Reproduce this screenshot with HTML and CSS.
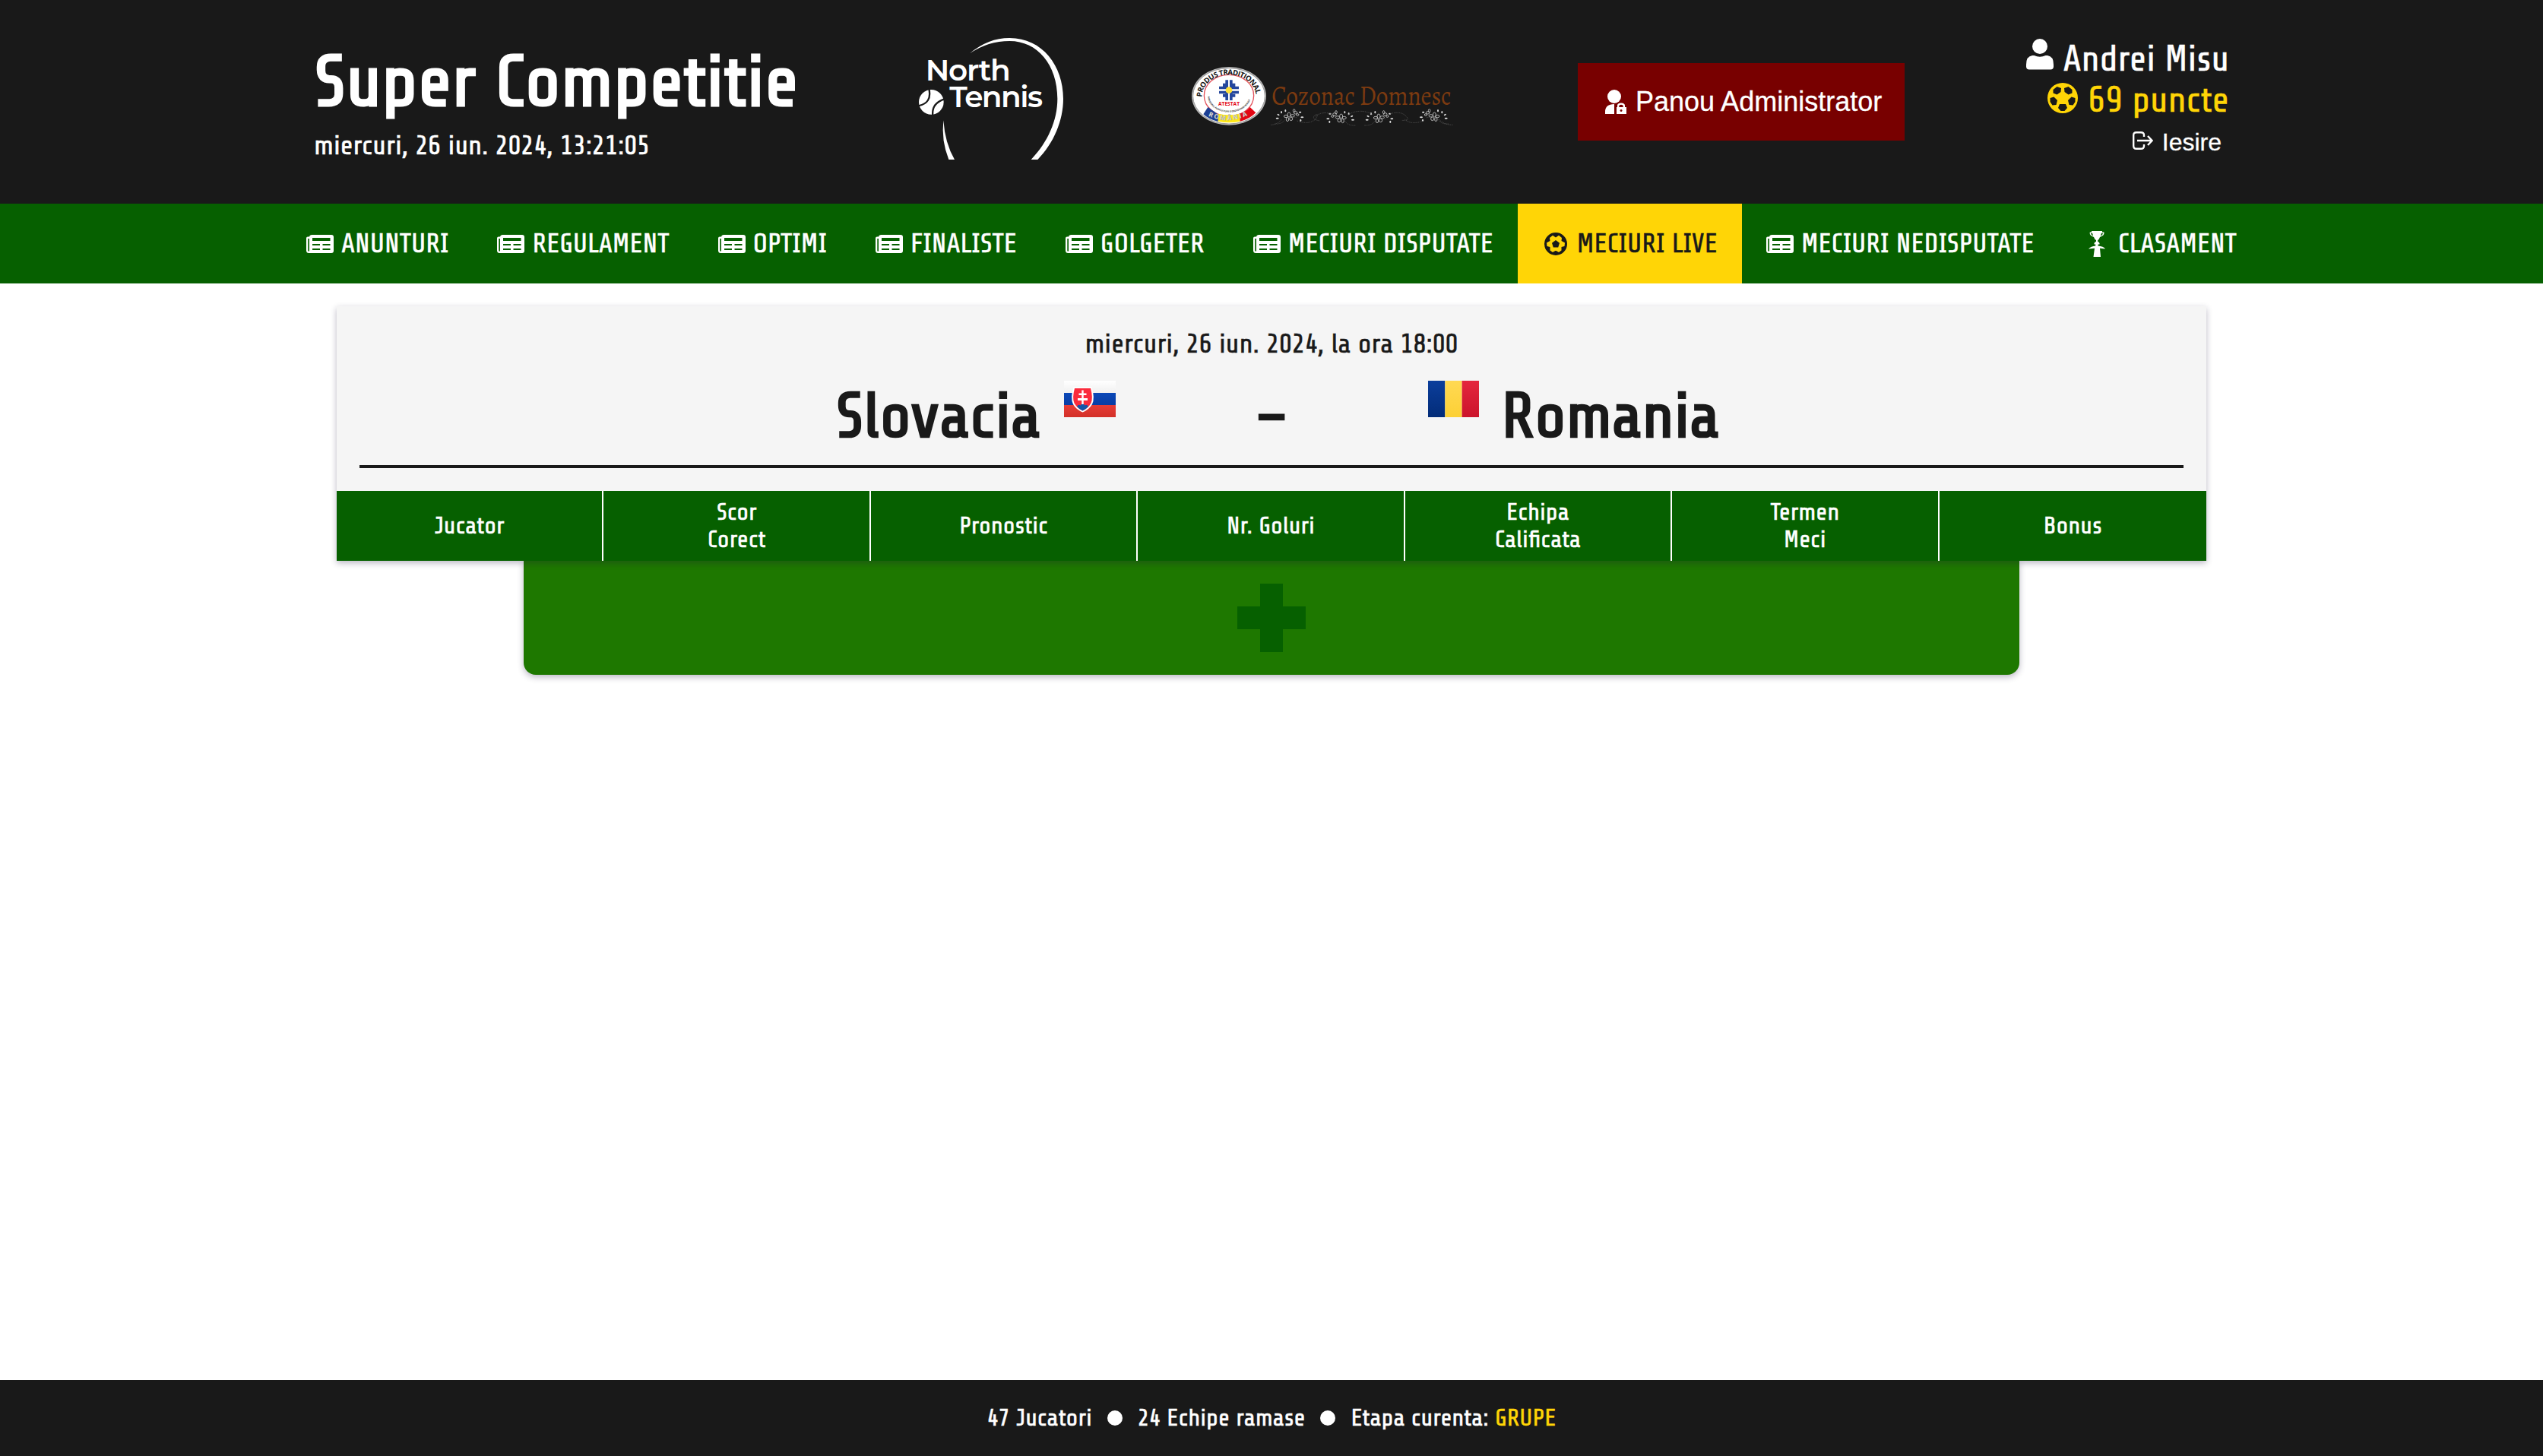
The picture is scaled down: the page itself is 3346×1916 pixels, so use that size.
FILE: index.html
```html
<!DOCTYPE html>
<html lang="ro">
<head>
<meta charset="utf-8">
<title>Super Competitie</title>
<link rel="stylesheet" href="styles.css">
</head>
<body>
<svg class="defs" aria-hidden="true">
  <symbol id="news" viewBox="0 0 36 24">
    <path fill-rule="evenodd" d="M7 0H33Q36 0 36 3V21Q36 24 33 24H3.500Q0 24 0 20.500V4.500Q0 2.500 2 2.500H4Q4.300 0 7 0ZM2.300 5V20.500Q2.300 21.700 3.200 21.700Q4 21.700 4 20.500V5ZM8 4V8H31.500V4ZM8 12V14H18V12ZM21.500 12V14H31.500V12ZM8 18V20H18V18ZM21.500 18V20H31.500V18Z"/>
  </symbol>
  <symbol id="flower" viewBox="0 0 120 70">
    <g class="petals">
      <ellipse cx="58" cy="24" rx="6" ry="9"/><ellipse cx="72" cy="28" rx="8" ry="5"/><ellipse cx="46" cy="30" rx="8" ry="5"/>
      <ellipse cx="52" cy="42" rx="5" ry="8"/><ellipse cx="66" cy="40" rx="6" ry="7"/><ellipse cx="84" cy="16" rx="7" ry="5"/>
      <ellipse cx="78" cy="8" rx="4" ry="6"/><ellipse cx="92" cy="24" rx="5" ry="4"/>
    </g>
    <g class="buds">
      <ellipse cx="16" cy="24" rx="5" ry="3" transform="rotate(30 16 24)"/><ellipse cx="12" cy="38" rx="6" ry="3"/>
      <ellipse cx="28" cy="14" rx="3" ry="5"/><ellipse cx="44" cy="8" rx="3" ry="5"/><ellipse cx="102" cy="14" rx="5" ry="3"/>
      <ellipse cx="110" cy="34" rx="6" ry="3"/><ellipse cx="104" cy="46" rx="3" ry="5"/>
    </g>
    <path class="vine" d="M2 60Q30 62 42 44T92 36"/>
  </symbol>
</svg>

<header class="header">
  <div class="brand">
    <h1>Super Competitie</h1>
    <p>miercuri, 26 iun. 2024, 13:21:05</p>
  </div>

  <svg class="logo-tennis" viewBox="87 60 570 480" role="img" aria-label="North Tennis">
    <path d="M288 121Q360 60 445 60C575 60 657 170 657 300C657 385 620 475 556 540H530C597 470 634 385 634 300C634 165 555 72 445 72Q360 72 288 121Z"/>
    <path d="M184 385Q190 475 228 540H205Q175 465 184 385Z"/>
    <circle cx="136" cy="313" r="49"/>
    <path class="seam" d="M127 260Q140 318 84 328M188 301Q136 318 142 366"/>
    <text x="113" y="228" textLength="336">North</text>
    <text x="208" y="333" textLength="368">Tennis</text>
  </svg>

  <svg class="logo-cozonac" viewBox="84 55 1032 231" role="img" aria-label="Cozonac Domnesc">
    <ellipse cx="231" cy="170" rx="147" ry="115" fill="#b9b9b9"/>
    <ellipse cx="231" cy="170" rx="142" ry="110" fill="#fff" stroke="#777" stroke-width="2"/>
    <ellipse cx="231" cy="168" rx="98" ry="82" fill="#fff" stroke="#e2525c" stroke-width="4"/>
    <path d="M148 214Q190 244 190 244L188 271Q150 262 130 242Z" fill="#1c3f94"/>
    <path d="M190 240Q232 250 273 240L275 270Q232 280 188 270Z" fill="#ffe81a"/>
    <path d="M273 240Q300 232 314 214L337 236Q312 262 275 270Z" fill="#e30613"/>
    <path d="M217 107h11v34h-11zM234 107h11v34h-11zM217 153h11v34h-11zM234 153h11v34h-11zM192 132h32v11h-32zM192 150h32v11h-32zM238 132h32v11h-32zM238 150h32v11h-32zM207 120h12v12h-12zM244 120h12v12h-12zM207 162h12v12h-12zM244 162h12v12h-12z" fill="#24479d"/>
    <circle cx="231" cy="147" r="13" fill="#ffe13a"/>
    <path id="arc-top" d="M124 174A107 88 0 0 1 338 174" fill="none"/>
    <path id="arc-mid" d="M148 172A84 62 0 0 0 316 172" fill="none"/>
    <path id="arc-low" d="M149 248Q231 286 314 242" fill="none"/>
    <text class="seal-top"><textPath href="#arc-top" textLength="296">PRODUS TRADITIONAL</textPath></text>
    <text class="seal-mid"><textPath href="#arc-mid" textLength="218">MINISTERUL AGRICULTURII SI DEZVOLTARII RURALE</textPath></text>
    <text class="seal-low"><textPath href="#arc-low" textLength="160">ROMÂNIA</textPath></text>
    <text class="seal-name" x="189" y="208" textLength="84" lengthAdjust="spacingAndGlyphs">ATESTAT</text>
    <text class="coz-name" x="400" y="205" textLength="708" lengthAdjust="spacingAndGlyphs">Cozonac Domnesc</text>
    <use href="#flower" x="410" y="220" width="120" height="70"/>
    <use href="#flower" x="0" y="0" width="120" height="70" transform="translate(732 226) scale(-1 1)"/>
    <use href="#flower" x="764" y="226" width="120" height="70"/>
    <use href="#flower" x="0" y="0" width="120" height="70" transform="translate(1100 220) scale(-1 1)"/>
    <path class="vine" d="M396 284Q420 284 440 262M500 268Q545 285 572 262Q588 240 572 244Q552 262 590 268M572 250Q600 228 640 242M700 244Q750 216 800 244M868 240Q910 228 930 250Q950 268 912 266M925 262Q950 286 1000 268M1060 262Q1080 284 1114 284"/>
  </svg>

  <div class="admin">
    <a class="admin-btn" href="#">
      <svg width="28" height="32" viewBox="0 0 28 32"><circle cx="12" cy="9" r="9"/><path d="M0 32V29Q0 19 12 19V32ZM15 23H16V21Q16 17.500 21 17.500Q26 17.500 26 21V23H28V32H15ZM18.300 23H23.700V21.500Q23.700 19.800 21 19.800Q18.300 19.800 18.300 21.500ZM21 26a1.500 1.500 0 1 0 .1 0Z" fill-rule="evenodd"/></svg>
      <span>Panou Administrator</span>
    </a>
  </div>

  <div class="user">
    <div class="user-name">
      <svg width="36" height="41" viewBox="0 0 36 41"><circle cx="18" cy="10" r="10"/><path d="M8 22H10.500Q18 25.500 25.500 22H28Q36 23 36 34V36.500Q36 40.500 32 40.500H4Q0 40.500 0 36.500V34Q0 23 8 22Z"/></svg>
      <span>Andrei Misu</span>
    </div>
    <div class="user-points">
      <svg width="40" height="40" viewBox="0 0 40 40"><path fill-rule="evenodd" d="M20 0A20 20 0 1 0 20 40A20 20 0 1 0 20 0ZM7.500 9L12.500 5L18 7L17.500 12L12.500 15.500L7.500 13.500ZM32.500 9L27.500 5L22 7L22.500 12L27.500 15.500L32.500 13.500ZM3.500 20L8.500 18.500L13 23L11.500 29L6.500 29.500L3.500 25ZM36.500 20L31.500 18.500L27 23L28.500 29L33.500 29.500L36.500 25ZM16 28H24L26 33L22.500 37H17.500L14 33Z"/></svg>
      <span>69 puncte</span>
    </div>
    <a class="logout" href="#">
      <svg width="27" height="24" viewBox="0 0 27 24"><path d="M15 7V5Q15 1.200 11 1.200H5Q1.200 1.200 1.200 5V19Q1.200 22.800 5 22.800H11Q15 22.800 15 19V17M6 12H25M20 6L25.500 12L20 18"/></svg>
      <span>Iesire</span>
    </a>
  </div>
</header>

<nav class="nav">
  <a href="#"><svg class="news"><use href="#news"/></svg>ANUNTURI</a>
  <a href="#"><svg class="news"><use href="#news"/></svg>REGULAMENT</a>
  <a href="#"><svg class="news"><use href="#news"/></svg>OPTIMI</a>
  <a href="#"><svg class="news"><use href="#news"/></svg>FINALISTE</a>
  <a href="#"><svg class="news"><use href="#news"/></svg>GOLGETER</a>
  <a href="#"><svg class="news"><use href="#news"/></svg>MECIURI DISPUTATE</a>
  <a href="#" class="active"><svg class="ball" viewBox="0 0 36 30"><path fill-rule="evenodd" d="M18 0A15 15 0 1 0 18 30A15 15 0 1 0 18 0ZM14 3.800L18 6.500L22 3.800L26 7L25.500 11L30 13.500L29.500 18L25.500 19L25.500 23.500L22 26L18.500 24H17.500L14 26L10.500 23.500V19L6.500 18L6 13.500L10.500 11L10 7Z"/><path d="M18 10L23 13.700L21.200 19.500H14.800L13 13.700Z"/></svg>MECIURI LIVE</a>
  <a href="#"><svg class="news"><use href="#news"/></svg>MECIURI NEDISPUTATE</a>
  <a href="#"><svg class="cup" viewBox="-7 0 36 34"><path d="M4 0H18V1.500H20.500Q21 6 15 8Q14 11 12.200 12V14Q15 15 14.500 17.500H12.500Q13.500 19 12 19.500Q20 20 22 23.500L15 22.800L16 34H6.500L8 22.800L0 23.500Q3 20 9.500 19.500Q8.500 18.500 9.500 17.500H7.500Q7 15 10 14V12Q8 11 7 8Q1 6 1.700 1.500H4ZM3 2.800Q3 5 6.200 6.500L5 2.800ZM19 2.800H17L15.800 6.500Q19 5 19 2.800Z" fill-rule="evenodd"/></svg>CLASAMENT</a>
</nav>

<main class="main">
  <section class="match">
    <div class="match-head">
      <p class="match-date">miercuri, 26 iun. 2024, la ora 18:00</p>
      <div class="teams">
        <div class="team home">
          <span>Slovacia</span>
          <svg class="flag" viewBox="0 0 68 48">
            <defs>
              <linearGradient id="w" x2="0" y2="1"><stop stop-color="#fff"/><stop offset="1" stop-color="#f0f0f0"/></linearGradient>
              <linearGradient id="b" x2="0" y2="1"><stop stop-color="#0b48b8"/><stop offset="1" stop-color="#083da4"/></linearGradient>
              <linearGradient id="r" x2="0" y2="1"><stop stop-color="#e63c36"/><stop offset="1" stop-color="#d33028"/></linearGradient>
            </defs>
            <path fill="url(#w)" d="M0 0H68V16H0z"/><path fill="url(#b)" d="M0 16H68V32H0z"/><path fill="url(#r)" d="M0 32H68V48H0z"/>
            <path d="M12.500 8.500H36.500Q41 23 37 31Q33 38 24.500 41.500Q16 38 12 31Q8 23 12.500 8.500Z" fill="#fff"/>
            <path d="M14 10H35Q38.500 23 35.500 29.500Q32 36 24.500 39.500Q17 36 13.500 29.500Q10.500 23 14 10Z" fill="#fb2b3c"/>
            <path d="M17 34Q19 30.500 21.500 32.500Q24.500 28 27.500 32.500Q30 30.500 32 34Q29 37.500 24.500 39.500Q20 37.500 17 34Z" fill="#1455a8"/>
            <path d="M23.300 12.500H25.700V16.500H29.500V19H25.700V23H31V26H25.700V31H23.300V26H18V23H23.300V19H19.500V16.500H23.300Z" fill="#fff"/>
          </svg>
        </div>
        <span class="dash">–</span>
        <div class="team away">
          <svg class="flag" viewBox="0 0 68 48" preserveAspectRatio="none">
            <defs>
              <linearGradient id="rb" x2="0" y2="1"><stop stop-color="#0b3e9c"/><stop offset="1" stop-color="#032c78"/></linearGradient>
              <linearGradient id="ry" x2="0" y2="1"><stop stop-color="#ffd953"/><stop offset="1" stop-color="#fcd035"/></linearGradient>
              <linearGradient id="rr" x2="0" y2="1"><stop stop-color="#e4263e"/><stop offset="1" stop-color="#cb142b"/></linearGradient>
            </defs>
            <path fill="url(#rb)" d="M0 0H22.700V48H0z"/><path fill="url(#ry)" d="M22.700 0H45.300V48H22.700z"/><path fill="url(#rr)" d="M45.300 0H68V48H45.300z"/>
          </svg>
          <span>Romania</span>
        </div>
      </div>
    </div>
    <div class="columns">
      <div>Jucator</div>
      <div>Scor<br>Corect</div>
      <div>Pronostic</div>
      <div>Nr. Goluri</div>
      <div>Echipa<br>Calificata</div>
      <div>Termen<br>Meci</div>
      <div>Bonus</div>
    </div>
  </section>
  <button class="expand" aria-label="Adauga">
    <svg width="90" height="90" viewBox="0 0 90 90"><path d="M30 0H60V30H90V60H60V90H30V60H0V30H30Z"/></svg>
  </button>
</main>

<footer class="footer">
  <span>47 Jucatori</span>
  <i class="dot"></i>
  <span>24 Echipe ramase</span>
  <i class="dot"></i>
  <span>Etapa curenta: <b>GRUPE</b></span>
</footer>
</body>
</html>
```
FILE: styles.css
```css
* {
  box-sizing: border-box;
  margin: 0;
  padding: 0;
}

body {
  display: flex;
  flex-direction: column;
  min-height: 1916px;
  background: #fff;
  color: #191919;
  font-family: "Share Tech", "Roboto Condensed", "Open Sans", sans-serif;
  font-size: 36px;
  -webkit-text-stroke: 0.500px;
}

a {
  color: inherit;
  text-decoration: none;
}

svg {
  display: block;
  flex: none;
  fill: currentColor;
  -webkit-text-stroke: 0;
}

.defs {
  position: absolute;
  width: 0;
  height: 0;
}

/* Header */
.header {
  display: grid;
  grid-template-columns: 796px 359px 508px 1fr auto;
  height: 268px;
  padding: 0 413px;
  background: #191919;
  color: #fff;
}

.brand {
  padding-top: 55px;
}

.brand h1 {
  font-size: 96px;
  font-weight: 700;
  line-height: 107px;
  white-space: nowrap;
}

.brand p {
  margin-top: 10px;
  line-height: 40px;
}

.logo-tennis {
  width: 190px;
  height: 160px;
  margin-top: 50px;
}

.logo-tennis text {
  font: 600 117px Montserrat, Lato, sans-serif;
}

.seam {
  fill: none;
  stroke: #191919;
  stroke-width: 7;
}

.logo-cozonac {
  width: 344px;
  height: 77px;
  margin-top: 88px;
  overflow: visible;
}

.seal-top {
  font: 700 29px "Open Sans", sans-serif;
  fill: #111;
}

.seal-mid {
  font: 700 9px "Open Sans", sans-serif;
  fill: #333;
}

.seal-low {
  font: 700 25px "Open Sans", sans-serif;
  fill: #f2f2f2;
  stroke: #888;
  stroke-width: 1;
}

.seal-name {
  font: 700 23px "Open Sans", sans-serif;
  fill: #e30613;
}

.coz-name {
  font: 400 108px Gabriola, Alegreya, "Liberation Serif", serif;
  fill: #7b3a10;
}

.petals {
  fill: none;
  stroke: #ccc;
  stroke-width: 2.500;
}

.buds {
  fill: #ddd;
}

.vine {
  fill: none;
  stroke: #555;
  stroke-width: 2.500;
  stroke-dasharray: 4 3;
}

.admin {
  padding-top: 83px;
}

.admin-btn {
  display: flex;
  align-items: center;
  gap: 12px;
  width: 430px;
  height: 102px;
  padding: 0 0 1px 36px;
  background: #780000;
  font-family: "Liberation Sans", Arial, sans-serif;
  font-size: 36px;
  white-space: nowrap;
  -webkit-text-stroke-width: 0.300px;
}

.user {
  display: flex;
  flex-direction: column;
  align-items: flex-end;
  padding-top: 51px;
  font-size: 48px;
  line-height: 54px;
}

.user-name,
.user-points,
.logout {
  display: flex;
}

.user-name {
  gap: 12px;
}

.user-points {
  gap: 14px;
  color: #ffd506;
}

.user-points svg {
  margin-top: 4px;
}

.logout {
  gap: 12px;
  margin-top: 10px;
  padding-right: 10px;
  font-family: "Liberation Sans", Arial, sans-serif;
  font-size: 32px;
  line-height: 36px;
  -webkit-text-stroke-width: 0.300px;
}

.logout svg {
  margin-top: 4px;
  fill: none;
  stroke: currentColor;
  stroke-width: 2.400;
}

/* Navigation */
.nav {
  display: flex;
  justify-content: center;
  height: 105px;
  background: #066000;
  color: #fff;
}

.nav a {
  display: flex;
  align-items: center;
  gap: 10px;
  padding: 0 32px;
  white-space: nowrap;
}

.nav .active {
  background: #ffd506;
  color: #191919;
}

.news {
  width: 36px;
  height: 24px;
}

.ball {
  width: 36px;
  height: 30px;
}

.cup {
  width: 36px;
  height: 34px;
}

/* Match card */
.main {
  display: flex;
  flex: 1;
  flex-direction: column;
  align-items: center;
  padding-top: 30px;
}

.match {
  position: relative;
  z-index: 1;
  width: 2460px;
  background: #f5f5f5;
  box-shadow: 0 3px 8px rgba(30, 20, 60, 0.300);
}

.match-head {
  padding: 30px 30px;
}

.match-date {
  line-height: 40px;
  text-align: center;
}

.teams {
  display: grid;
  grid-template-columns: 1fr 411px 1fr;
  height: 143px;
  padding-top: 28px;
  border-bottom: 4px solid #191919;
  font-size: 84px;
  font-weight: 700;
  line-height: 94px;
}

.brand h1,
.teams {
  -webkit-text-stroke-width: 0;
}

.team {
  display: flex;
  gap: 30px;
}

.home {
  justify-content: flex-end;
}

.dash {
  text-align: center;
}

.flag {
  width: 68px;
  height: 48px;
}

.away .flag {
  width: 67px;
}

.columns {
  display: grid;
  grid-template-columns: repeat(7, 1fr);
  height: 92px;
  background: #066000;
  color: #fff;
  font-size: 32px;
  line-height: 36px;
  text-align: center;
}

.columns div {
  display: grid;
  place-items: center;
  place-content: center;
  border-right: 2px solid #fff;
}

.columns div:last-child {
  border-right: 0;
}

.expand {
  display: grid;
  place-items: center;
  width: 1968px;
  height: 150px;
  border: 0;
  border-radius: 0 0 16px 16px;
  background: #1e7800;
  box-shadow: 0 3px 8px rgba(30, 20, 60, 0.300);
  color: #066000;
}

/* Footer */
.footer {
  display: flex;
  align-items: center;
  justify-content: center;
  gap: 20px;
  height: 100px;
  background: #191919;
  color: #fff;
  font-size: 32px;
}

.footer b {
  color: #ffd506;
  font-weight: 400;
}

.dot {
  width: 20px;
  height: 20px;
  border-radius: 50%;
  background: #fff;
}
```
